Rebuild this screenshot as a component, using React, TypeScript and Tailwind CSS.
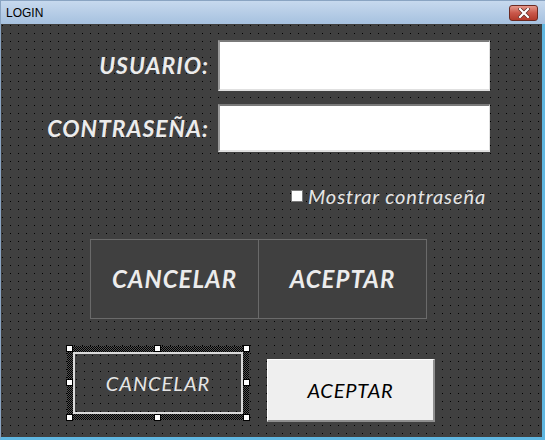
import React from "react"

const dots =
  "bg-[#404040] bg-[radial-gradient(circle_at_1.5px_1.5px,#000_0.9px,transparent_1px)] bg-[size:8px_8px] bg-[position:0px_0px]"

function Handle({ className }: { className: string }) {
  return <div className={`absolute h-[7px] w-[7px] border border-black bg-white ${className}`} />
}

export default function App() {
  return (
    <div className="flex h-[440px] w-[545px] flex-col overflow-hidden bg-[#404040] font-['Lato','Open_Sans',sans-serif]">
      {/* Title bar */}
      <div className="flex h-[24px] shrink-0 items-center justify-between border-t border-l border-[#8aa4c2] bg-gradient-to-b from-[#c7d9ee] to-[#a6c1df] pl-[5px] pr-[7px]">
        <span className="font-['Liberation_Sans',sans-serif] text-[12px] text-black">LOGIN</span>
        <div className="flex h-[16px] w-[29px] items-center justify-center rounded-[3px] border border-[#6b2a22] bg-gradient-to-b from-[#e4988b] via-[#c9574a] to-[#b23a2b]">
          <svg width="12" height="10" viewBox="0 0 12 10">
            <path d="M2 1 L10 9 M10 1 L2 9" stroke="#5a2a24" strokeWidth="3.6" strokeLinecap="square" />
            <path d="M2 1 L10 9 M10 1 L2 9" stroke="#fff" strokeWidth="2.2" strokeLinecap="square" />
          </svg>
        </div>
      </div>

      {/* Form body */}
      <div className={`flex flex-1 flex-col border-r-[3px] border-b-[3px] border-l border-r-[#5fb6e0] border-b-[#5fb6e0] border-l-[#8aa4c2] ${dots}`}>
        {/* Usuario */}
        <div className="mt-[16px] flex items-center gap-[9px]">
          <span className="w-[208px] text-right text-[23px] font-bold italic tracking-[1px] text-[#ececec]">USUARIO:</span>
          <div className="h-[51px] w-[272px] border-t-2 border-l-2 border-r border-b-2 border-t-[#7a7a7a] border-l-[#9a9a9a] border-r-[#e0e0e0] border-b-[#e0e0e0] bg-white" />
        </div>

        {/* Contraseña */}
        <div className="mt-[13px] flex items-center gap-[9px]">
          <span className="w-[208px] text-right text-[23px] font-bold italic tracking-[1px] text-[#ececec]">CONTRASEÑA:</span>
          <div className="h-[48px] w-[272px] border-t-2 border-l-2 border-r border-b-2 border-t-[#7a7a7a] border-l-[#9a9a9a] border-r-[#e0e0e0] border-b-[#e0e0e0] bg-white" />
        </div>

        {/* Mostrar contraseña */}
        <div className="mt-[33px] flex items-center pl-[290px]">
          <div className="h-[12px] w-[12px] border border-[#7a7a7a] bg-white" />
          <span className="ml-[5px] text-[20px] italic leading-[22px] tracking-[0.9px] text-[#e6e6e6]">Mostrar contraseña</span>
        </div>

        {/* Big buttons */}
        <div className="mt-[32px] flex pl-[89px]">
          <div className="flex h-[80px] w-[169px] items-center justify-center border border-[#6a6a6a] bg-[#404040] text-[24px] font-bold italic tracking-[1px] text-[#ececec]">
            CANCELAR
          </div>
          <div className="-ml-px flex h-[80px] w-[169px] items-center justify-center border border-[#6a6a6a] bg-[#404040] text-[24px] font-bold italic tracking-[1px] text-[#ececec]">
            ACEPTAR
          </div>
        </div>

        {/* Bottom buttons */}
        <div className="mt-[27px] flex items-start pl-[66px]">
          <div className="relative h-[74px] w-[182px] bg-[repeating-conic-gradient(#000_0_25%,#505050_0_50%)] bg-[size:2px_2px] p-[6px]">
            <div className={`flex h-full w-full items-center justify-center border-2 border-[#dcdcdc] text-[20px] italic tracking-[1px] text-[#e6e6e6] ${dots}`}>
              CANCELAR
            </div>
            <Handle className="-top-[1px] -left-[1px]" />
            <Handle className="-top-[1px] left-[87px]" />
            <Handle className="-top-[1px] -right-[1px]" />
            <Handle className="top-[33px] -left-[1px]" />
            <Handle className="top-[33px] -right-[1px]" />
            <Handle className="-bottom-[1px] -left-[1px]" />
            <Handle className="-bottom-[1px] left-[87px]" />
            <Handle className="-bottom-[1px] -right-[1px]" />
          </div>
          <div className="mt-[13px] ml-[18px] flex h-[63px] w-[168px] items-center justify-center border border-t-white border-l-white border-r-2 border-b-2 border-r-[#8f8f8f] border-b-[#8f8f8f] bg-[#efefef] text-[20px] italic tracking-[0.8px] text-black">
            ACEPTAR
          </div>
        </div>
      </div>
    </div>
  )
}
